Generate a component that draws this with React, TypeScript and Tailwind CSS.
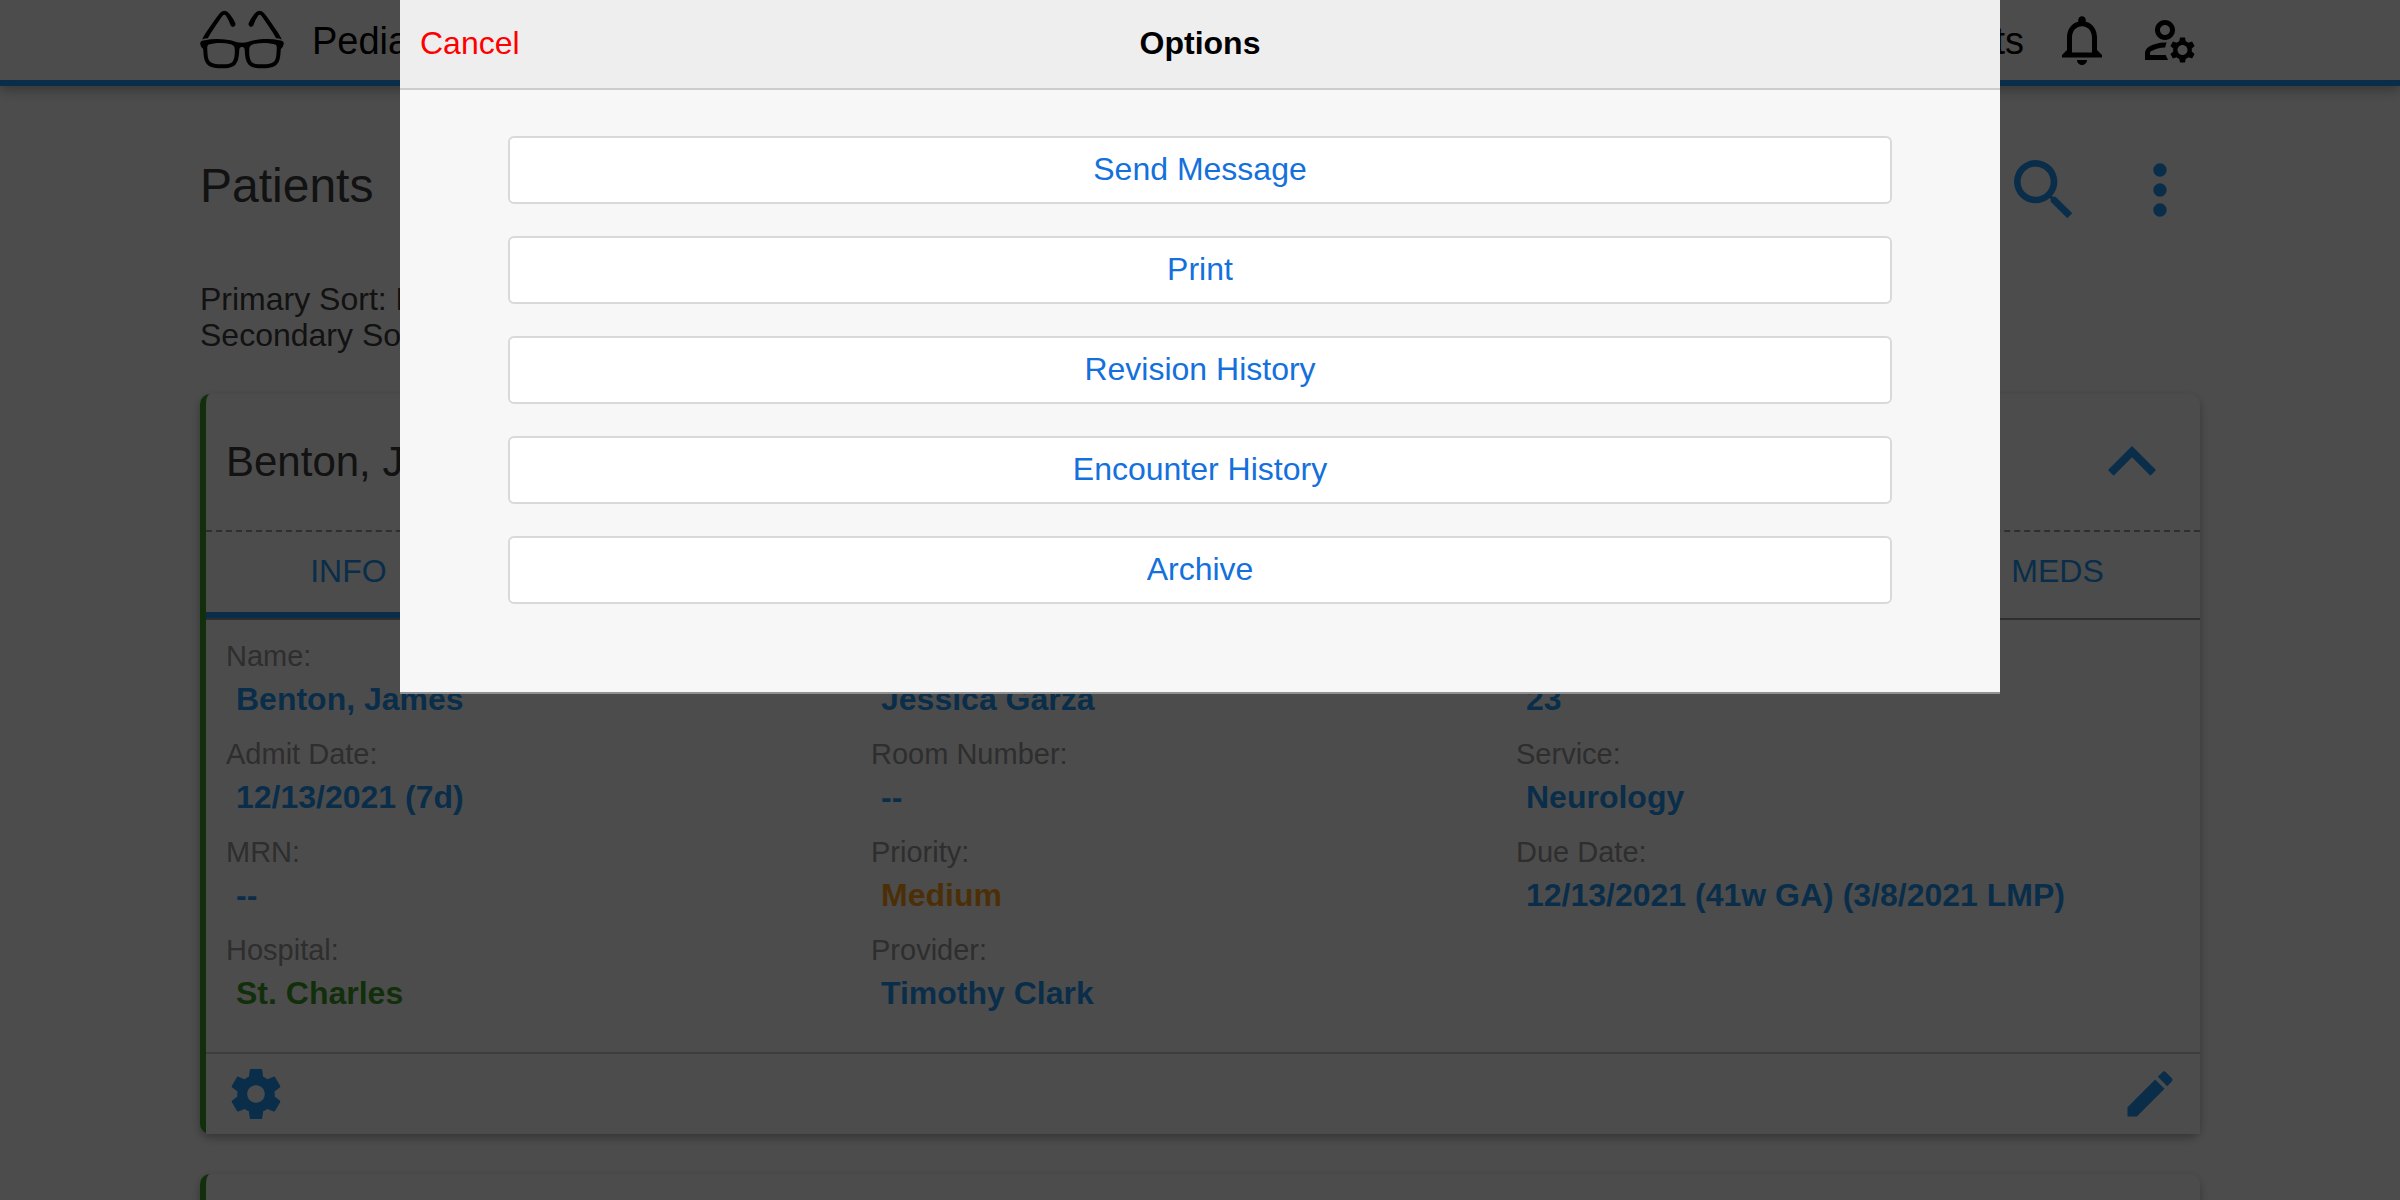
import type { ReactNode } from "react";
import {
  MdEdit,
  MdKeyboardArrowUp,
  MdMoreVert,
  MdNotificationsNone,
  MdOutlineManageAccounts,
  MdSearch,
} from "react-icons/md";

function GlassesLogo() {
  return (
    <svg viewBox="60 28 252 178" className="mb-0.5 h-[59px] w-[84px]" aria-hidden="true">
      <g id="half">
        <path
          d="M66 117C74 98 98 66 117 40Q133 20 149 40Q160 54 166 68Q168 78 159 79Q151 78 150 70Q146 58 138 46Q133 39 127 46C114 64 96 90 83 113Q74 113 66 117Z"
          fill="#000"
        />
        <path
          fillRule="evenodd"
          d="M60 127Q62 120 74 119C105 113 145 116 166 124Q176 127 186 127V140Q180 139 178 146C177 165 176 182 166 193C154 204 134 204 122 204C100 204 84 200 76 186C70 174 70 160 69 146Q60 139 60 127ZM84 133Q81 136 81 142C82 162 82 174 88 182C96 191 108 192 124 192C138 192 150 192 157 185C164 176 165 160 164 144Q163 134 152 131C130 126 104 126 84 133Z"
          fill="#000"
        />
      </g>
      <use href="#half" transform="matrix(-1 0 0 1 372 0)" />
    </svg>
  );
}

function GearIcon() {
  return (
    <svg viewBox="0 0 24 24" className="size-15" fill="currentColor" aria-hidden="true">
      <path d="M19.43 12.98c.04-.32.07-.64.07-.98s-.03-.66-.07-.98l2.11-1.65c.19-.15.24-.42.12-.64l-2-3.46c-.12-.22-.39-.3-.61-.22l-2.49 1c-.52-.4-1.08-.73-1.69-.98l-.38-2.65C14.46 2.18 14.25 2 14 2h-4c-.25 0-.46.18-.49.42l-.38 2.65c-.61.25-1.17.59-1.69.98l-2.49-1c-.23-.09-.49 0-.61.22l-2 3.46c-.13.22-.07.49.12.64l2.11 1.65c-.04.32-.07.65-.07.98s.03.66.07.98l-2.11 1.65c-.19.15-.24.42-.12.64l2 3.46c.12.22.39.3.61.22l2.49-1c.52.4 1.08.73 1.69.98l.38 2.65c.03.24.24.42.49.42h4c.25 0 .46-.18.49-.42l.38-2.65c.61-.25 1.17-.59 1.69-.98l2.49 1c.23.09.49 0 .61-.22l2-3.46c.12-.22.07-.49-.12-.64l-2.11-1.65zM12 15.5c-1.93 0-3.5-1.57-3.5-3.5s1.57-3.5 3.5-3.5 3.5 1.57 3.5 3.5-1.57 3.5-3.5 3.5z" />
    </svg>
  );
}

const blue = "text-[#249cf9]";

type FieldProps = { label: string; value: string; tone?: string };

function Field({ label, value, tone = blue }: FieldProps) {
  return (
    <div>
      <dt className="text-[29px] leading-[42px] text-[#999999]">{label}</dt>
      <dd className={`pl-2.5 text-[32px] leading-[44px] font-bold ${tone}`}>{value}</dd>
    </div>
  );
}

const columns: FieldProps[][] = [
  [
    { label: "Name:", value: "Benton, James" },
    { label: "Admit Date:", value: "12/13/2021 (7d)" },
    { label: "MRN:", value: "--" },
    { label: "Hospital:", value: "St. Charles", tone: "text-[#3f9f28]" },
  ],
  [
    { label: "Attending:", value: "Jessica Garza" },
    { label: "Room Number:", value: "--" },
    { label: "Priority:", value: "Medium", tone: "text-[#ff9f1a]" },
    { label: "Provider:", value: "Timothy Clark" },
  ],
  [
    { label: "Age:", value: "23" },
    { label: "Service:", value: "Neurology" },
    { label: "Due Date:", value: "12/13/2021 (41w GA) (3/8/2021 LMP)" },
  ],
];

const tabs = ["INFO", "NOTES", "TASKS", "LABS", "VITALS", "ORDERS", "MEDS"];
const actions = ["Send Message", "Print", "Revision History", "Encounter History", "Archive"];

function Card({ name, children }: { name: string; children?: ReactNode }) {
  return (
    <article className="mb-10 rounded-[10px] border-l-6 border-[#3f9f28] bg-white shadow-[0_4px_10px_rgba(0,0,0,0.3)]">
      <header className="flex h-[136px] items-center justify-between px-5">
        <h2 className="text-[42px] leading-[48px] text-[#3c3c3c]">{name}</h2>
        <button type="button" aria-label="Collapse" className={blue}>
          <MdKeyboardArrowUp className="size-24" />
        </button>
      </header>
      {children}
    </article>
  );
}

export default function App() {
  return (
    <div className="h-screen overflow-hidden bg-white font-['Liberation_Sans',Arial,sans-serif]">
      <header className="border-b-6 border-[#249cf9] bg-white shadow-[0_4px_12px_rgba(0,0,0,0.3)]">
        <div className="mx-auto flex h-20 w-5/6 items-center text-[38px] text-black">
          <GlassesLogo />
          <span className="ml-7 pt-0.5">Pediatrics</span>
          <nav className="ml-auto flex items-center gap-7">
            <a href="#patients" className="pt-0.5">
              Patients
            </a>
            <button type="button" aria-label="Notifications">
              <MdNotificationsNone className="size-15" />
            </button>
            <button type="button" aria-label="Account settings">
              <MdOutlineManageAccounts className="size-15" />
            </button>
          </nav>
        </div>
      </header>

      <main className="mx-auto w-5/6 pt-16">
        <div className="flex items-start justify-between">
          <h1 className="text-[48px] leading-[72px] text-[#3c3c3c]">Patients</h1>
          <div className={`flex gap-9 ${blue}`}>
            <button type="button" aria-label="Search">
              <MdSearch className="size-20" />
            </button>
            <button type="button" aria-label="More">
              <MdMoreVert className="size-20" />
            </button>
          </div>
        </div>
        <div className="mt-[51px] mb-[41px] text-[32px] leading-[36px] text-[#3c3c3c]">
          <p>Primary Sort: Last Name</p>
          <p>Secondary Sort: Room Number</p>
        </div>

        <Card name="Benton, James">
          <div role="tablist" className="flex border-t-2 border-b-2 border-t-[#999999] border-b-[#999999] [border-top-style:dashed]">
            {tabs.map((tab, i) => (
              <button
                key={tab}
                type="button"
                role="tab"
                aria-selected={i === 0}
                className={`h-[86px] flex-1 border-b-6 pb-0.5 text-[32px] ${blue} ${i === 0 ? "border-[#249cf9]" : "border-transparent"}`}
              >
                {tab}
              </button>
            ))}
          </div>
          <div className="grid grid-cols-3 pt-[15px] pr-[39px] pb-[37px] pl-5">
            {columns.map((fields) => (
              <dl key={fields[0].label} className="flex flex-col gap-3">
                {fields.map((field) => (
                  <Field key={field.label} {...field} />
                ))}
              </dl>
            ))}
          </div>
          <footer className={`flex items-center justify-between border-t-2 border-[#cccccc] bg-white px-5 py-2.5 ${blue}`}>
            <button type="button" aria-label="Options">
              <GearIcon />
            </button>
            <button type="button" aria-label="Edit">
              <MdEdit className="size-15" />
            </button>
          </footer>
        </Card>
        <Card name="Carter, Emily" />
      </main>

      <div className="fixed inset-0 bg-black/70">
        <section
          role="dialog"
          aria-modal="true"
          aria-labelledby="dialog-title"
          className="mx-auto w-2/3 border-b-2 border-[#919191] bg-[#f7f7f7]"
        >
          <header className="grid h-[90px] grid-cols-[1fr_auto_1fr] items-center border-b-2 border-[#cccccc] bg-[#eeeeee] px-5 pb-0.5 text-[32px] leading-[36px]">
            <button type="button" className="justify-self-start text-[#ff0000]">
              Cancel
            </button>
            <h2 id="dialog-title" className="font-bold text-black">
              Options
            </h2>
          </header>
          <div className="flex flex-col gap-8 px-[108px] pt-[46px] pb-[88px]">
            {actions.map((action) => (
              <button
                key={action}
                type="button"
                className="h-[68px] rounded-md border-2 border-[#d9d9d9] bg-white pb-0.5 text-[32px] leading-[36px] text-[#1470dc]"
              >
                {action}
              </button>
            ))}
          </div>
        </section>
      </div>
    </div>
  );
}
